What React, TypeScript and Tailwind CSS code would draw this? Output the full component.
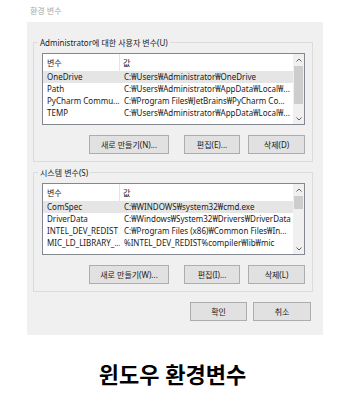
const userVars: [string, string][] = [
  ["OneDrive", "C:₩Users₩Administrator₩OneDrive"],
  ["Path", "C:₩Users₩Administrator₩AppData₩Local₩..."],
  ["PyCharm Commu...", "C:₩Program Files₩JetBrains₩PyCharm Co..."],
  ["TEMP", "C:₩Users₩Administrator₩AppData₩Local₩..."],
];

const sysVars: [string, string][] = [
  ["ComSpec", "C:₩WINDOWS₩system32₩cmd.exe"],
  ["DriverData", "C:₩Windows₩System32₩Drivers₩DriverData"],
  ["INTEL_DEV_REDIST", "C:₩Program Files (x86)₩Common Files₩In..."],
  ["MIC_LD_LIBRARY_...", "%INTEL_DEV_REDIST%compiler₩lib₩mic"],
];

function Chevron({ up }: { up?: boolean }) {
  return (
    <svg width="6" height="4" viewBox="0 0 6 4" className="block">
      <polyline
        points={up ? "0.5,3.5 3,1 5.5,3.5" : "0.5,0.5 3,3 5.5,0.5"}
        fill="none"
        stroke="#606060"
        strokeWidth="1"
      />
    </svg>
  );
}

// thin windows-style scrollbar on the right of the list
function Scrollbar({ thumbTop, thumbHeight }: { thumbTop: number; thumbHeight: number }) {
  return (
    <div className="flex w-[11px] flex-col items-center bg-[#f0f0f0]">
      <div className="flex h-[11px] items-center justify-center">
        <Chevron up />
      </div>
      <div className="w-full flex-1 px-[1px]">
        <div className="w-full bg-[#cdcdcd]" style={{ marginTop: thumbTop, height: thumbHeight }} />
      </div>
      <div className="flex h-[11px] items-center justify-center">
        <Chevron />
      </div>
    </div>
  );
}

function VarList({
  rows,
  thumbTop,
  thumbHeight,
}: {
  rows: [string, string][];
  thumbTop: number;
  thumbHeight: number;
}) {
  return (
    <div className="ml-[8px] flex h-[72px] w-[263px] border border-[#828790] bg-white">
      <div className="flex-1 overflow-hidden">
        <div className="flex h-[17px]">
          <div className="flex w-[77px] items-center border-r border-[#e5e5e5] pl-[4px]">변수</div>
          <div className="flex items-center pl-[3px]">값</div>
        </div>
        {rows.map(([name, value], i) => (
          <div
            key={name}
            className={i === 0 ? "flex h-[12px] items-center bg-[#e5e5e5]" : "flex h-[12px] items-center"}
          >
            <div className="w-[77px] overflow-hidden whitespace-nowrap pl-[4px]">{name}</div>
            <div className="whitespace-nowrap pl-[4px]">{value}</div>
          </div>
        ))}
      </div>
      <Scrollbar thumbTop={thumbTop} thumbHeight={thumbHeight} />
    </div>
  );
}

function Btn({ label, w }: { label: string; w: string }) {
  return (
    <div
      className={`flex h-[19px] items-center justify-center border border-[#adadad] bg-[#e1e1e1] ${w}`}
    >
      {label}
    </div>
  );
}

function Group({
  title,
  rows,
  thumbTop,
  thumbHeight,
  buttons,
}: {
  title: string;
  rows: [string, string][];
  thumbTop: number;
  thumbHeight: number;
  buttons: [string, string, string];
}) {
  return (
    <div className="ml-[6px] w-[280px] border border-[#dcdcdc] pb-[7px]">
      <div className="-mt-[6px] ml-[4px] h-[11px] w-fit bg-[#f0f0f0] px-[2px] leading-[11px]">{title}</div>
      <div className="mt-[5px]">
        <VarList rows={rows} thumbTop={thumbTop} thumbHeight={thumbHeight} />
      </div>
      <div className="mt-[10px] flex justify-end pr-[7px]">
        <Btn label={buttons[0]} w="w-[80px]" />
        <div className="ml-[15px]">
          <Btn label={buttons[1]} w="w-[56px]" />
        </div>
        <div className="ml-[8px]">
          <Btn label={buttons[2]} w="w-[57px]" />
        </div>
      </div>
    </div>
  );
}

export default function App() {
  return (
    <div className="h-[414px] w-[345px] overflow-hidden bg-white font-['Noto_Sans','Noto_Sans_CJK_KR',sans-serif] text-[8px] text-[#1a1a1a]">
      <div className="h-[22px] pl-[30px] pt-[5px] leading-[11px] text-[#a8a8a8]">환경 변수</div>

      <div className="ml-[27px] h-[313px] w-[296px] bg-[#f0f0f0] pt-[20px]">
        <Group
          title="Administrator에 대한 사용자 변수(U)"
          rows={userVars}
          thumbTop={1}
          thumbHeight={38}
          buttons={["새로 만들기(N)...", "편집(E)...", "삭제(D)"]}
        />
        <div className="mt-[10px]">
          <Group
            title="시스템 변수(S)"
            rows={sysVars}
            thumbTop={1}
            thumbHeight={13}
            buttons={["새로 만들기(W)...", "편집(I)...", "삭제(L)"]}
          />
        </div>
        <div className="mt-[10px] flex justify-end gap-[6px] pr-[12px]">
          <Btn label="확인" w="w-[57px]" />
          <Btn label="취소" w="w-[58px]" />
        </div>
      </div>

      <div className="mt-[24px] text-center text-[22px] font-bold leading-[30px] text-black">윈도우 환경변수</div>
    </div>
  );
}
